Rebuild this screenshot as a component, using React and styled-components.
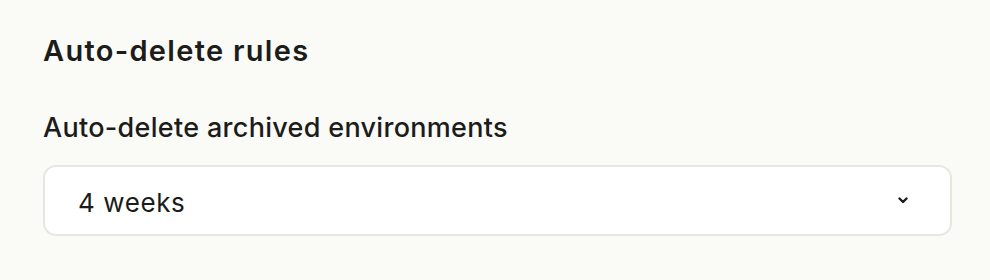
import React from 'react';
import styled, { createGlobalStyle } from 'styled-components';

const GlobalStyle = createGlobalStyle`
  html, body {
    margin: 0;
    padding: 0;
    background: #fafaf6;
  }
  body {
    font-family: Inter, "Noto Sans", sans-serif;
    color: #1c1c1a;
  }
`;

const Section = styled.section`
  padding: 34px 38px 0 43px;
`;

const Heading = styled.h2`
  margin: 0;
  font-size: 29px;
  line-height: 34px;
  font-weight: 600;
  letter-spacing: 1.3px;
`;

const Field = styled.div`
  margin-top: 44px;
  display: flex;
  flex-direction: column;
  gap: 21px;
`;

const Label = styled.label`
  font-size: 27px;
  line-height: 32px;
  font-weight: 500;
  letter-spacing: 0.3px;
`;

const Select = styled.div`
  height: 71px;
  box-sizing: border-box;
  border: 2px solid #e7e7e2;
  border-radius: 13px;
  background: #ffffff;
  display: flex;
  align-items: center;
  justify-content: space-between;
  padding: 0 42px 0 33px;
`;

const Value = styled.span`
  padding-top: 3px;
  font-size: 26px;
  font-weight: 400;
  letter-spacing: 0.6px;
  color: #1c1c1a;
`;

const Chevron = () => (
  <svg width="10" height="7" viewBox="0 0 10 7" fill="none">
    <path d="M1.5 1.5 L5 5 L8.5 1.5" stroke="#1c1c1a" strokeWidth="2.4" strokeLinecap="round" strokeLinejoin="round" />
  </svg>
);

export default function App() {
  return (
    <>
      <GlobalStyle />
      <Section>
        <Heading>Auto-delete rules</Heading>
        <Field>
          <Label>Auto-delete archived environments</Label>
          <Select>
            <Value>4 weeks</Value>
            <Chevron />
          </Select>
        </Field>
      </Section>
    </>
  );
}
